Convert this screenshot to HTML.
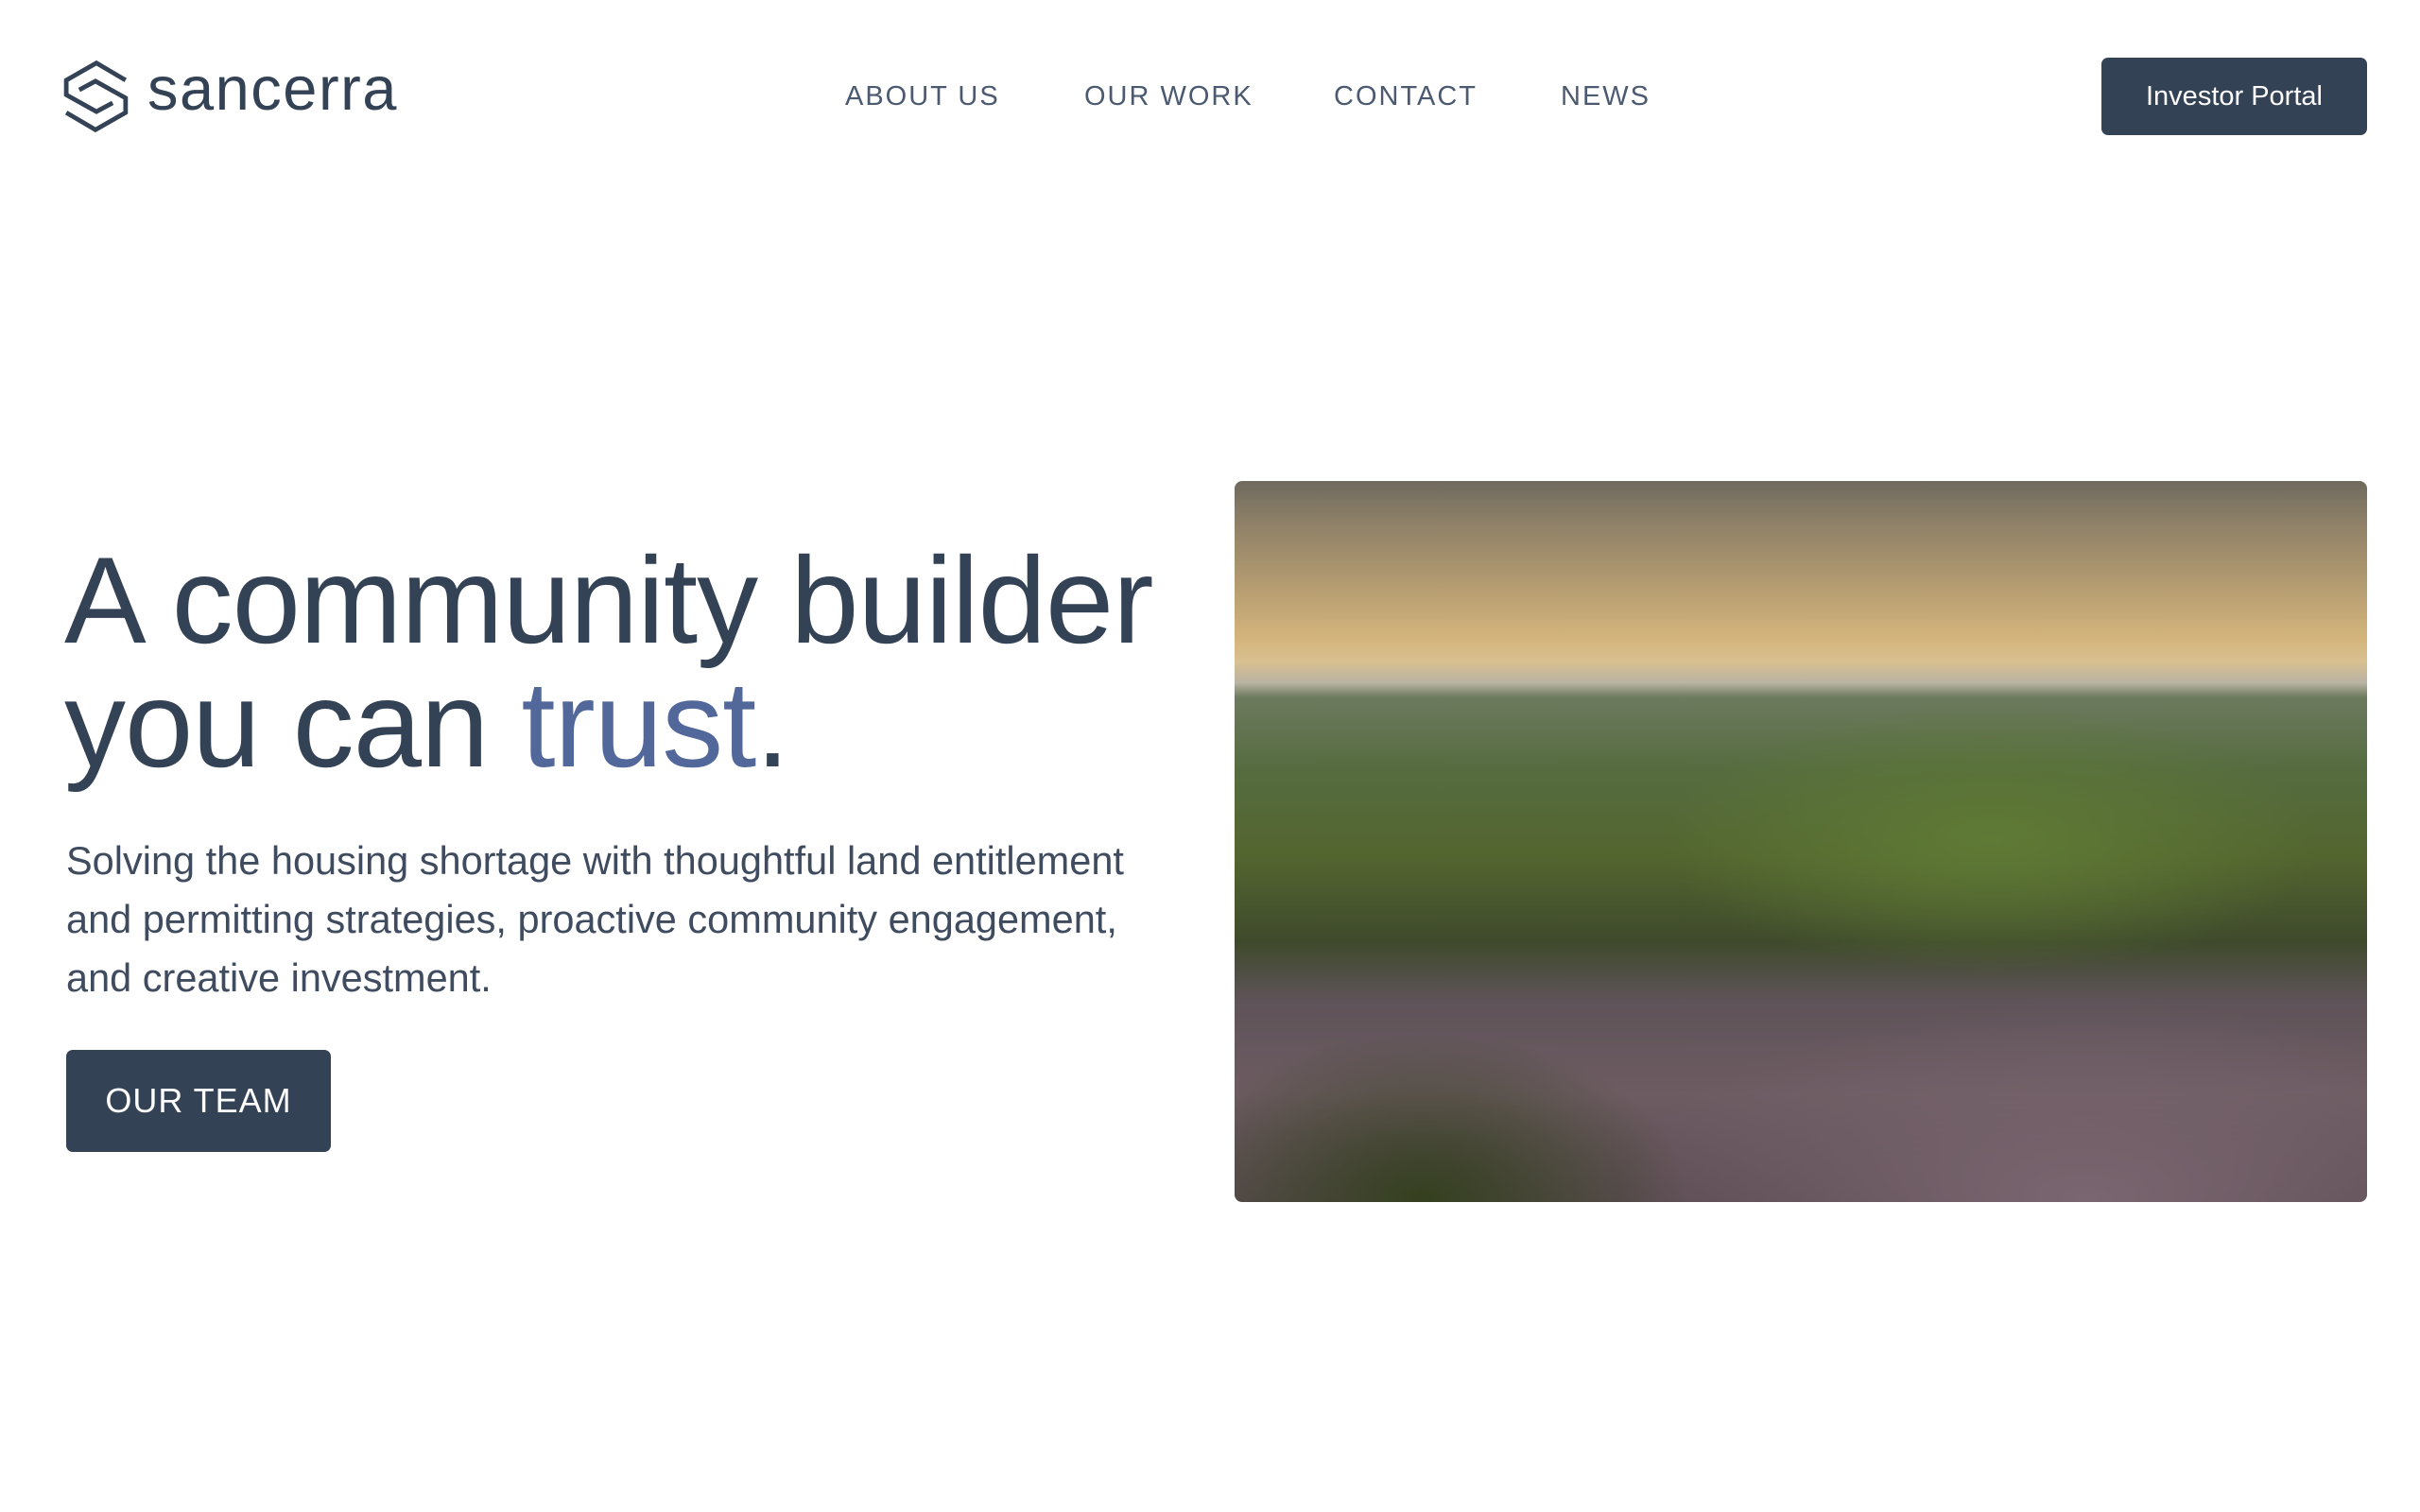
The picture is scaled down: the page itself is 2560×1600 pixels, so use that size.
<!DOCTYPE html>
<html><head><meta charset="utf-8"><style>
*{margin:0;padding:0;box-sizing:border-box}
body{width:2560px;height:1600px;background:#fff;font-family:"Liberation Sans",sans-serif;position:relative;overflow:hidden}
.logo{position:absolute;left:66px;top:62px}
.brand{position:absolute;left:156px;top:56px;font-size:65px;color:#344256;letter-spacing:1.5px}
.nav{position:absolute;top:86px;font-size:29px;letter-spacing:2px;color:#4b5a70}
.btn{position:absolute;background:#344256;color:#fff;border-radius:7px;display:flex;align-items:center;justify-content:center}
h1{position:absolute;left:68px;top:570px;font-size:130px;font-weight:normal;line-height:131px;color:#344256;letter-spacing:-1px}
h1 span{color:#52689a}
p{position:absolute;left:70px;top:880px;width:1300px;font-size:41.5px;line-height:62px;color:#3f4b5e}
.img{position:absolute;left:1306px;top:509px;width:1198px;height:763px;border-radius:8px;overflow:hidden;
background:linear-gradient(180deg,#6f6a5e 0%,#8f8168 6%,#b29a70 14%,#d4b57c 22%,#d9c090 25%,#b9b3a3 28%,#6c7a5e 30%,#566c40 40%,#53652f 52%,#3f4a2c 64%,#5e5358 72%,#6d5c62 85%,#5d4d55 100%)}
</style></head><body>
<svg class="logo" width="72" height="80" viewBox="50 70 210 230"><g fill="none" stroke="#344256" stroke-width="14" stroke-linejoin="miter">
<path d="M245 135 L155 82 L62 135 L62 180 L155 232 L205 205"/>
<path d="M62 235 L152 288 L245 235 L245 190 L152 138 L102 165"/></g></svg>
<div class="brand">sancerra</div>
<div class="nav" style="left:894px">ABOUT US</div>
<div class="nav" style="left:1147px">OUR WORK</div>
<div class="nav" style="left:1411px">CONTACT</div>
<div class="nav" style="left:1651px">NEWS</div>
<div class="btn" style="left:2223px;top:61px;width:281px;height:82px;font-size:29px">Investor Portal</div>
<h1>A community builder<br>you can <span>trust</span>.</h1>
<p>Solving the housing shortage with thoughtful land entitlement<br>and permitting strategies, proactive community engagement,<br>and creative investment.</p>
<div class="btn" style="left:70px;top:1111px;width:280px;height:108px;font-size:36px;letter-spacing:1px">OUR TEAM</div>
<div class="img">
<div style="position:absolute;left:0;top:200px;width:100%;height:563px;background:radial-gradient(ellipse 500px 200px at 800px 180px,#5f7a35 0%,transparent 70%),radial-gradient(ellipse 700px 300px at 900px 560px,#7a6670 0%,transparent 70%),radial-gradient(ellipse 400px 250px at 200px 560px,#34401f 0%,transparent 70%)"></div>
</div>
</body></html>
